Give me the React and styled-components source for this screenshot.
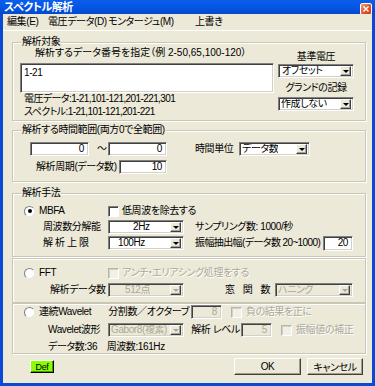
import React from 'react';
import styled, { createGlobalStyle } from 'styled-components';

const GlobalStyle = createGlobalStyle`
  html, body { margin: 0; padding: 0; background: #fff; }
  body {
    font-family: "Liberation Sans", "Noto Sans CJK JP", sans-serif;
    font-size: 10px;
    font-feature-settings: "palt";
    letter-spacing: -0.4px;
    color: #000;
  }
`;

const Window = styled.div`
  width: 375px;
  height: 386px;
  box-sizing: border-box;
  padding: 0 3px 3px;
  background: #0a48d6;
  display: flex;
  flex-direction: column;
`;

const TitleBar = styled.div`
  height: 14px;
  margin: 0 -3px;
  padding: 0 3px 0 4px;
  display: flex;
  align-items: center;
  justify-content: space-between;
  background: linear-gradient(#0a5fea, #0558e6 40%, #0451dc 70%, #0448cc);
`;

const Title = styled.span`
  color: #fff;
  font-weight: bold;
  font-size: 11px;
  line-height: 14px;
  letter-spacing: -0.5px;
`;

const CloseBtn = styled.div`
  width: 10px;
  height: 10px;
  margin-top: 3px;
  border: 1px solid #fff;
  border-radius: 2px;
  background: linear-gradient(135deg, #f0a080, #e0542c 55%, #c83c18);
  display: flex;
  align-items: center;
  justify-content: center;
`;

const MenuBar = styled.div`
  height: 16px;
  padding-left: 4px;
  background: #ece9d8;
  border-bottom: 1px solid #fff;
  display: flex;
  align-items: center;
`;

const MenuItem = styled.span`
  width: ${p => (p.$w ? `${p.$w}px` : 'auto')};
  flex-shrink: 0;
  white-space: nowrap;
  line-height: 16px;
`;

const Body = styled.div`
  flex: 1;
  background: #ece9d8;
  display: flex;
  flex-direction: column;
`;

const Group = styled.div`
  position: relative;
  box-sizing: border-box;
  margin: ${p => p.$mt}px 0 0 9px;
  width: 354px;
  height: ${p => p.$h}px;
  border: 1px solid #c9c6b6;
  box-shadow: inset 1px 1px 0 #fff, 1px 1px 0 #fff;
  padding-top: ${p => p.$pt || 0}px;
  display: flex;
  flex-direction: ${p => (p.$row ? 'row' : 'column')};
`;

const Legend = styled.span`
  position: absolute;
  top: -7px;
  left: 8px;
  padding: 0 1px;
  background: #ece9d8;
  line-height: 12px;
  white-space: nowrap;
`;

const Row = styled.div`
  display: flex;
  align-items: center;
  height: ${p => p.$h || 14}px;
  margin-top: ${p => p.$mt || 0}px;
  padding-left: ${p => p.$pl || 0}px;
`;

const Text = styled.span`
  display: flex;
  flex-shrink: 0;
  justify-content: ${p => (p.$right ? 'flex-end' : 'flex-start')};
  width: ${p => (p.$w ? `${p.$w}px` : 'auto')};
  margin-left: ${p => p.$ml || 0}px;
  margin-top: ${p => p.$mt || 0}px;
  color: ${p => (p.$disabled ? '#aca899' : '#000')};
  text-shadow: ${p => (p.$disabled ? '1px 1px 0 #fff' : 'none')};
  letter-spacing: ${p => (p.$ls !== undefined ? `${p.$ls}px` : 'inherit')};
  line-height: 12px;
  white-space: nowrap;
`;

const Field = styled.div`
  box-sizing: border-box;
  flex-shrink: 0;
  width: ${p => p.$w}px;
  height: ${p => p.$h || 14}px;
  margin-left: ${p => p.$ml || 0}px;
  margin-top: ${p => p.$mt || 0}px;
  padding: 0 4px 0 3px;
  background: ${p => (p.$disabled ? '#ece9d8' : '#fff')};
  border: 1px solid;
  border-color: #808080 #fff #fff #808080;
  box-shadow: inset 1px 1px 0 #404040, inset -1px -1px 0 #d4d0c8;
  color: ${p => (p.$disabled ? '#aca899' : '#000')};
  display: flex;
  align-items: center;
  justify-content: ${p => (p.$right ? 'flex-end' : 'flex-start')};
  line-height: 1;
  white-space: nowrap;
`;

const TextArea = styled(Field)`
  align-items: flex-start;
  padding-top: 4px;
`;

const SelectBox = styled(Field)`
  padding: 0 2px 0 0;
  justify-content: space-between;
`;

const SelectValue = styled.span`
  padding-left: ${p => p.$pl ?? 3}px;
  white-space: nowrap;
  overflow: hidden;
`;

const ArrowBtn = styled.div`
  box-sizing: border-box;
  width: 11px;
  height: 10px;
  flex-shrink: 0;
  background: #ece9d8;
  border: 1px solid;
  border-color: #fff #404040 #404040 #fff;
  box-shadow: inset -1px -1px 0 #a0a0a0;
  display: flex;
  align-items: center;
  justify-content: center;
  &::after {
    content: '';
    width: 0;
    height: 0;
    border-left: 3px solid transparent;
    border-right: 3px solid transparent;
    border-top: 3px solid ${p => (p.$disabled ? '#aca899' : '#000')};
  }
`;

const Radio = styled.span`
  box-sizing: border-box;
  flex-shrink: 0;
  width: 11px;
  height: 11px;
  margin-left: ${p => p.$ml || 0}px;
  border-radius: 50%;
  background: #fff;
  border: 1px solid;
  border-color: #808080 #e8e8e8 #e8e8e8 #808080;
  display: flex;
  align-items: center;
  justify-content: center;
  &::after {
    content: '';
    display: ${p => (p.$checked ? 'block' : 'none')};
    width: 4px;
    height: 4px;
    border-radius: 50%;
    background: #000;
  }
`;

const Check = styled.span`
  box-sizing: border-box;
  flex-shrink: 0;
  width: 11px;
  height: 11px;
  margin-left: ${p => p.$ml || 0}px;
  background: ${p => (p.$disabled ? '#f2f0e6' : '#fff')};
  border: 1px solid;
  border-color: ${p => (p.$disabled ? '#b8b5a6 #fff #fff #b8b5a6' : '#808080 #fff #fff #808080')};
  box-shadow: inset 1px 1px 0 ${p => (p.$disabled ? '#d4d0c8' : '#404040')};
`;

const Col = styled.div`
  display: flex;
  flex-direction: column;
  flex-shrink: 0;
  width: ${p => p.$w}px;
  margin-left: ${p => p.$ml}px;
  align-items: ${p => (p.$center ? 'center' : 'stretch')};
`;

const ButtonRow = styled.div`
  display: flex;
  align-items: center;
  margin-top: 4px;
  height: 17px;
`;

const DefButton = styled.div`
  box-sizing: border-box;
  width: 24px;
  height: 13px;
  margin-left: 27px;
  background: #88ff00;
  border: 1px solid;
  border-color: #fff #000 #000 #fff;
  box-shadow: inset -1px -1px 0 #4a9a00;
  font-size: 9px;
  display: flex;
  align-items: center;
  justify-content: center;
`;

const PushButton = styled.div`
  box-sizing: border-box;
  width: ${p => p.$w}px;
  height: 17px;
  margin-left: ${p => p.$ml || 0}px;
  margin-right: ${p => p.$mr || 0}px;
  background: #ece9d8;
  border: 1px solid;
  border-color: #fff #404040 #404040 #fff;
  box-shadow: inset -1px -1px 0 #a09d8c;
  display: flex;
  align-items: center;
  justify-content: center;
`;

const Select = ({ w, value, pl, disabled, ml, mt }) => (
  <SelectBox $w={w} $ml={ml} $mt={mt} $disabled={disabled}>
    <SelectValue $pl={pl}>{value}</SelectValue>
    <ArrowBtn $disabled={disabled} />
  </SelectBox>
);

export default function App() {
  return (
    <>
      <GlobalStyle />
      <Window>
        <TitleBar>
          <Title>スペクトル解析</Title>
          <CloseBtn>
            <svg width="6" height="6" viewBox="0 0 6 6">
              <path d="M0.5 0.5 L5.5 5.5 M5.5 0.5 L0.5 5.5" stroke="#fff" strokeWidth="1.4" />
            </svg>
          </CloseBtn>
        </TitleBar>
        <MenuBar>
          <MenuItem $w={41}>編集(E)</MenuItem>
          <MenuItem $w={60}>電圧データ(D)</MenuItem>
          <MenuItem $w={87}>モンタージュ(M)</MenuItem>
          <MenuItem>上書き</MenuItem>
        </MenuBar>
        <Body>
          <Group $mt={11} $h={79} $row>
            <Legend>解析対象</Legend>
            <Col $w={254} $ml={7}>
              <Row $h={12} $mt={4} $pl={15}>
                <Text $ls={0}>解析するデータ番号を指定（例 2-50,65,100-120）</Text>
              </Row>
              <TextArea $w={254} $h={30} $mt={4}>1-21</TextArea>
              <Row $h={12} $pl={4}>
                <Text $ls={-0.6}>電圧データ:1-21,101-121,201-221,301</Text>
              </Row>
              <Row $h={12} $mt={1} $pl={4}>
                <Text $ls={-0.6}>スペクトル:1-21,101-121,201-221</Text>
              </Row>
            </Col>
            <Col $w={76} $ml={4} $center>
              <Text $mt={8}>基準電圧</Text>
              <Select w={76} mt={1} value="オフセット" />
              <Text $mt={4}>グランドの記録</Text>
              <Select w={76} mt={3} value="作成しない" pl={2} />
            </Col>
          </Group>

          <Group $mt={9} $h={52} $pt={11}>
            <Legend>解析する時間範囲(両方0で全範囲)</Legend>
            <Row>
              <Field $w={59} $ml={17} $right>0</Field>
              <Text $w={10} $ml={8}>～</Text>
              <Field $w={59} $ml={1} $right>0</Field>
              <Text $w={44} $ml={28}>時間単位</Text>
              <Select w={71} value="データ数" pl={2} />
            </Row>
            <Row $mt={4}>
              <Text $w={83} $ml={23}>解析周期(データ数)</Text>
              <Field $w={48} $right>10</Field>
            </Row>
          </Group>

          <Group $mt={11} $h={64} $pt={10}>
            <Legend>解析手法</Legend>
            <Row>
              <Radio $ml={11} $checked />
              <Text $w={69} $ml={4}>MBFA</Text>
              <Check />
              <Text $ml={3}>低周波を除去する</Text>
            </Row>
            <Row $mt={2}>
              <Text $w={65} $ml={30}>周波数分解能</Text>
              <Select w={76} value="2Hz" pl={24} />
              <Text $ml={11}>サンプリング数: 1000/秒</Text>
            </Row>
            <Row $mt={2}>
              <Text $w={65} $ml={30}>解 析 上 限</Text>
              <Select w={76} value="100Hz" pl={9} />
              <Text $w={128} $ml={11} $ls={-0.6}>振幅抽出幅(データ数 20~1000)</Text>
              <Field $w={30} $h={15} $right>20</Field>
            </Row>
          </Group>

          <Group $mt={1} $h={45} $pt={7}>
            <Row>
              <Radio $ml={11} />
              <Text $w={69} $ml={4}>FFT</Text>
              <Check $disabled />
              <Text $ml={3} $disabled>アンチ・エリアシング処理をする</Text>
            </Row>
            <Row $mt={3}>
              <Text $w={58} $ml={37}>解析データ数</Text>
              <Select w={76} value="512点" pl={16} disabled />
              <Text $w={50} $ml={41} $ls={2.5}>窓 関 数</Text>
              <Select w={78} value="ハニング" pl={2} disabled />
            </Row>
          </Group>

          <Group $mt={0} $h={51} $pt={1}>
            <Row>
              <Radio $ml={11} />
              <Text $w={75} $ml={4}>連続Wavelet</Text>
              <Text $w={75} $right>分割数／オクターブ</Text>
              <Field $w={31} $ml={2} $right $disabled>8</Field>
              <Check $ml={9} $disabled />
              <Text $ml={4} $disabled>負の結果を正に</Text>
            </Row>
            <Row $mt={4}>
              <Text $w={60} $ml={35}>Wavelet波形</Text>
              <Select w={76} value="Gabor8(複素)" pl={2} disabled />
              <Text $w={56} $right>解析 レベル</Text>
              <Field $w={31} $ml={1} $right $disabled>5</Field>
              <Check $ml={9} $disabled />
              <Text $ml={4} $disabled>振幅値の補正</Text>
            </Row>
            <Row $mt={4} $h={12}>
              <Text $ml={35}>データ数:36　周波数:161Hz</Text>
            </Row>
          </Group>

          <ButtonRow>
            <DefButton>Def</DefButton>
            <PushButton $w={67} style={{ marginLeft: 'auto' }}>OK</PushButton>
            <PushButton $w={56} $ml={6} $mr={9}>キャンセル</PushButton>
          </ButtonRow>
        </Body>
      </Window>
    </>
  );
}
